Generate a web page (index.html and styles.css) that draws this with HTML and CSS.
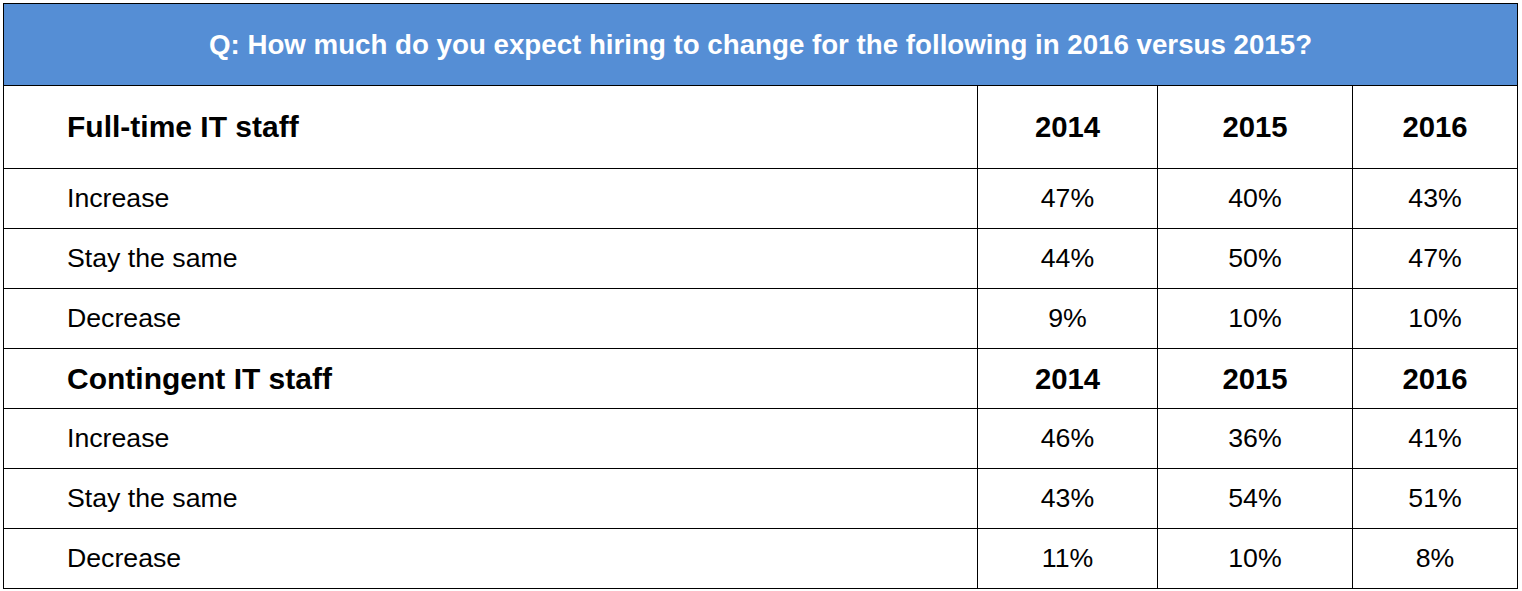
FILE: index.html
```html
<!DOCTYPE html>
<html>
<head>
<meta charset="utf-8">
<link rel="stylesheet" href="styles.css">
</head>
<body>
<table class="survey">
  <colgroup>
    <col class="c-label">
    <col class="c-y1">
    <col class="c-y2">
    <col class="c-y3">
  </colgroup>
  <thead>
    <tr class="title-row">
      <th colspan="4" class="title">Q: How much do you expect hiring to change for the following in 2016 versus 2015?</th>
    </tr>
  </thead>
  <tbody>
    <tr class="group-row first">
      <th class="label">Full-time IT staff</th>
      <th>2014</th><th>2015</th><th>2016</th>
    </tr>
    <tr class="data-row"><td class="label">Increase</td><td>47%</td><td>40%</td><td>43%</td></tr>
    <tr class="data-row"><td class="label">Stay the same</td><td>44%</td><td>50%</td><td>47%</td></tr>
    <tr class="data-row"><td class="label">Decrease</td><td>9%</td><td>10%</td><td>10%</td></tr>
    <tr class="group-row">
      <th class="label">Contingent IT staff</th>
      <th>2014</th><th>2015</th><th>2016</th>
    </tr>
    <tr class="data-row"><td class="label">Increase</td><td>46%</td><td>36%</td><td>41%</td></tr>
    <tr class="data-row"><td class="label">Stay the same</td><td>43%</td><td>54%</td><td>51%</td></tr>
    <tr class="data-row"><td class="label">Decrease</td><td>11%</td><td>10%</td><td>8%</td></tr>
  </tbody>
</table>
</body>
</html>
```
FILE: styles.css
```css
html, body {
  margin: 0;
  padding: 0;
  background: #ffffff;
}
body {
  padding: 3px 0 0 3px;
  font-family: "Liberation Sans", Arial, sans-serif;
  color: #000000;
}
.survey {
  border-collapse: collapse;
  table-layout: fixed;
  width: 1514px;
}
.c-label { width: 974px; }
.c-y1 { width: 180px; }
.c-y2 { width: 195px; }
.c-y3 { width: 165px; }
.survey th,
.survey td {
  border: 1px solid #000000;
  padding: 0;
  text-align: center;
  vertical-align: middle;
}
.title {
  background: #558ed5;
  color: #ffffff;
  font-weight: bold;
  font-size: 27.7px;
  height: 81px;
}
.group-row th {
  font-weight: bold;
  font-size: 29.3px;
  height: 59px;
}
.group-row.first th {
  height: 82px;
}
.group-row th.label {
  font-size: 30px;
}
.data-row td {
  font-size: 26.7px;
  height: 59px;
}
.survey .label {
  text-align: left;
  padding-left: 63px;
}
```
